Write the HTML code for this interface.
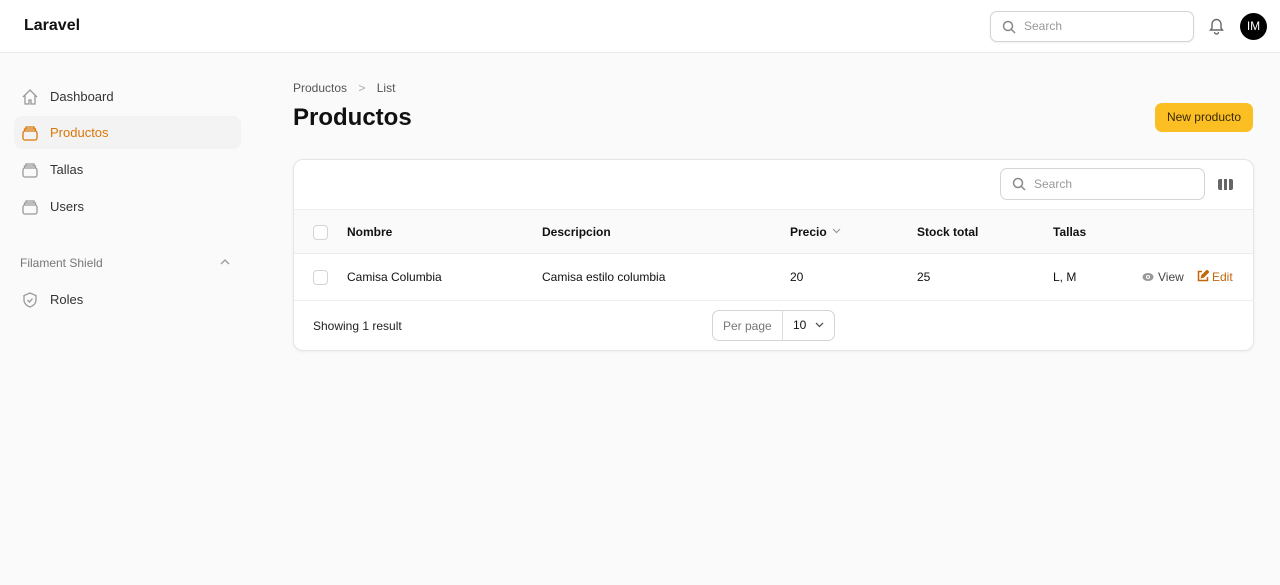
<!DOCTYPE html>
<html><head><meta charset="utf-8"><style>
*{box-sizing:border-box;margin:0;padding:0}
body{width:1280px;height:585px;background:#fafafa;font-family:"Liberation Sans",sans-serif;color:#111;position:relative;overflow:hidden;font-size:13px}
.top{position:absolute;left:0;top:0;width:1280px;height:53px;background:#fff;border-bottom:1px solid #e8e8e8}
.abs{position:absolute}
.nav{position:absolute;left:14px;width:227px;height:33px;border-radius:8px;display:flex;align-items:center;padding-left:36px;font-size:13px;color:#333}
.nav svg{position:absolute;left:7px;top:8px}
.th{position:absolute;top:225px;font-weight:bold;font-size:12px}
.td{position:absolute;top:270px;font-size:12px}
.cb{position:absolute;width:15px;height:15px;border:1px solid #d4d4d4;border-radius:4px;background:#fff}
</style></head><body>
<div class="top">
<div class="abs" style="left:24px;top:17px;font-weight:bold;font-size:16px">Laravel</div>
<div class="abs" style="left:990px;top:11px;width:204px;height:31px;border:1px solid #d4d4d4;border-radius:7px;box-shadow:0 1px 2px rgba(0,0,0,.06)">
<svg class="abs" style="left:11px;top:8px" width="14" height="14" viewBox="0 0 14 14" fill="none" stroke="#888" stroke-width="1.5"><circle cx="6" cy="6" r="4.5"/><path d="M9.5 9.5L13 13"/></svg>
<span class="abs" style="left:33px;top:7px;color:#999;font-size:12px">Search</span></div>
<svg class="abs" style="left:1208px;top:17px" width="17" height="18" viewBox="0 0 17 18" fill="none" stroke="#666" stroke-width="1.4"><path d="M4 7a4.5 4.5 0 019 0v4l1.5 2h-12L4 11z"/><path d="M6.5 15a2 2 0 004 0"/></svg>
<div class="abs" style="left:1240px;top:13px;width:27px;height:27px;border-radius:50%;background:#000;color:#fff;font-size:12px;text-align:center;line-height:27px">IM</div>
</div>
<div class="nav" style="top:80px"><svg width="18" height="18" viewBox="0 0 18 18" fill="none" stroke="#999" stroke-width="1.3"><path d="M2 9l7-7 7 7M4 7.5V16h4v-4h2v4h4V7.5"/></svg>Dashboard</div>
<div class="nav" style="top:116px;background:#f3f3f4;color:#d97706"><svg width="18" height="18" viewBox="0 0 18 18" fill="none" stroke="#d97706" stroke-width="1.3"><rect x="2" y="7" width="14" height="9" rx="2"/><path d="M3.5 7V5h11v2M5 5V3h8v2"/></svg>Productos</div>
<div class="nav" style="top:153px"><svg width="18" height="18" viewBox="0 0 18 18" fill="none" stroke="#999" stroke-width="1.3"><rect x="2" y="7" width="14" height="9" rx="2"/><path d="M3.5 7V5h11v2M5 5V3h8v2"/></svg>Tallas</div>
<div class="nav" style="top:190px"><svg width="18" height="18" viewBox="0 0 18 18" fill="none" stroke="#999" stroke-width="1.3"><rect x="2" y="7" width="14" height="9" rx="2"/><path d="M3.5 7V5h11v2M5 5V3h8v2"/></svg>Users</div>
<div class="abs" style="left:20px;top:256px;color:#777;font-size:12px">Filament Shield</div>
<svg class="abs" style="left:220px;top:258px" width="10" height="8" viewBox="0 0 10 8" fill="none" stroke="#999" stroke-width="1.3"><path d="M1 6l4-4 4 4"/></svg>
<div class="nav" style="top:283px"><svg width="18" height="18" viewBox="0 0 18 18" fill="none" stroke="#999" stroke-width="1.3"><path d="M9 2l6 2.5V9c0 3.5-3 6-6 7-3-1-6-3.5-6-7V4.5z"/><path d="M6.5 9l2 2 3-3.5"/></svg>Roles</div>

<div class="abs" style="left:293px;top:81px;color:#555;font-size:12px">Productos <span style="margin:0 8px;color:#aaa">&gt;</span> List</div>
<div class="abs" style="left:293px;top:104px;font-weight:bold;font-size:24px">Productos</div>
<div class="abs" style="left:1155px;top:103px;width:98px;height:29px;background:#fbbf24;border-radius:7px;font-size:12px;color:#3a2a00;text-align:center;line-height:29px">New producto</div>

<div class="abs" style="left:293px;top:159px;width:961px;height:192px;background:#fff;border:1px solid #e5e5e5;border-radius:10px;box-shadow:0 1px 3px rgba(0,0,0,.05);overflow:hidden">
<div class="abs" style="left:706px;top:8px;width:205px;height:32px;border:1px solid #d4d4d4;border-radius:7px">
<svg class="abs" style="left:11px;top:8px" width="14" height="14" viewBox="0 0 14 14" fill="none" stroke="#888" stroke-width="1.5"><circle cx="6" cy="6" r="4.5"/><path d="M9.5 9.5L13 13"/></svg>
<span class="abs" style="left:33px;top:8px;color:#999;font-size:12px">Search</span></div>
<div class="abs" style="left:924px;top:19px;width:15px;height:11px;background:#666;border-radius:2px"><div class="abs" style="left:4px;top:0;width:1.5px;height:11px;background:#fff"></div><div class="abs" style="left:9px;top:0;width:1.5px;height:11px;background:#fff"></div></div>
<div class="abs" style="left:0;top:49px;width:961px;height:45px;background:#fafafa;border-top:1px solid #eee;border-bottom:1px solid #eee"></div>
<div class="abs" style="left:0;top:140px;width:961px;border-top:1px solid #eee"></div>
</div>
<div class="cb" style="left:313px;top:225px"></div>
<div class="th" style="left:347px">Nombre</div>
<div class="th" style="left:542px">Descripcion</div>
<div class="th" style="left:790px">Precio</div>
<svg class="abs" style="left:832px;top:228px" width="9" height="6" viewBox="0 0 9 6" fill="none" stroke="#999" stroke-width="1.2"><path d="M1 1l3.5 3.5L8 1"/></svg>
<div class="th" style="left:917px">Stock total</div>
<div class="th" style="left:1053px">Tallas</div>
<div class="cb" style="left:313px;top:270px"></div>
<div class="td" style="left:347px">Camisa Columbia</div>
<div class="td" style="left:542px">Camisa estilo columbia</div>
<div class="td" style="left:790px">20</div>
<div class="td" style="left:917px">25</div>
<div class="td" style="left:1053px">L, M</div>
<svg class="abs" style="left:1142px;top:272px" width="12" height="10" viewBox="0 0 12 10"><ellipse cx="6" cy="5" rx="5.5" ry="4" fill="#999"/><circle cx="6" cy="5" r="2" fill="#fff"/><circle cx="6" cy="5" r="1" fill="#999"/></svg>
<div class="td" style="left:1158px;color:#444">View</div>
<svg class="abs" style="left:1197px;top:270px" width="12" height="12" viewBox="0 0 12 12" fill="none" stroke="#c2660a" stroke-width="1.5"><path d="M5 1.5H1.5v9h9V7"/><path d="M4.5 7.5l.5-2 5-5 1.5 1.5-5 5z" fill="#c2660a"/></svg>
<div class="td" style="left:1212px;color:#c2660a">Edit</div>
<div class="abs" style="left:313px;top:319px;font-size:12px;color:#222">Showing 1 result</div>
<div class="abs" style="left:712px;top:310px;width:123px;height:31px;border:1px solid #d4d4d4;border-radius:7px;font-size:12px">
<span class="abs" style="left:10px;top:8px;color:#777">Per page</span>
<div class="abs" style="left:69px;top:0;height:29px;border-left:1px solid #ddd"></div>
<span class="abs" style="left:80px;top:7px">10</span>
<svg class="abs" style="left:102px;top:11px" width="9" height="6" viewBox="0 0 9 6" fill="none" stroke="#555" stroke-width="1.3"><path d="M1 1l3.5 3.5L8 1"/></svg>
</div>
</body></html>
